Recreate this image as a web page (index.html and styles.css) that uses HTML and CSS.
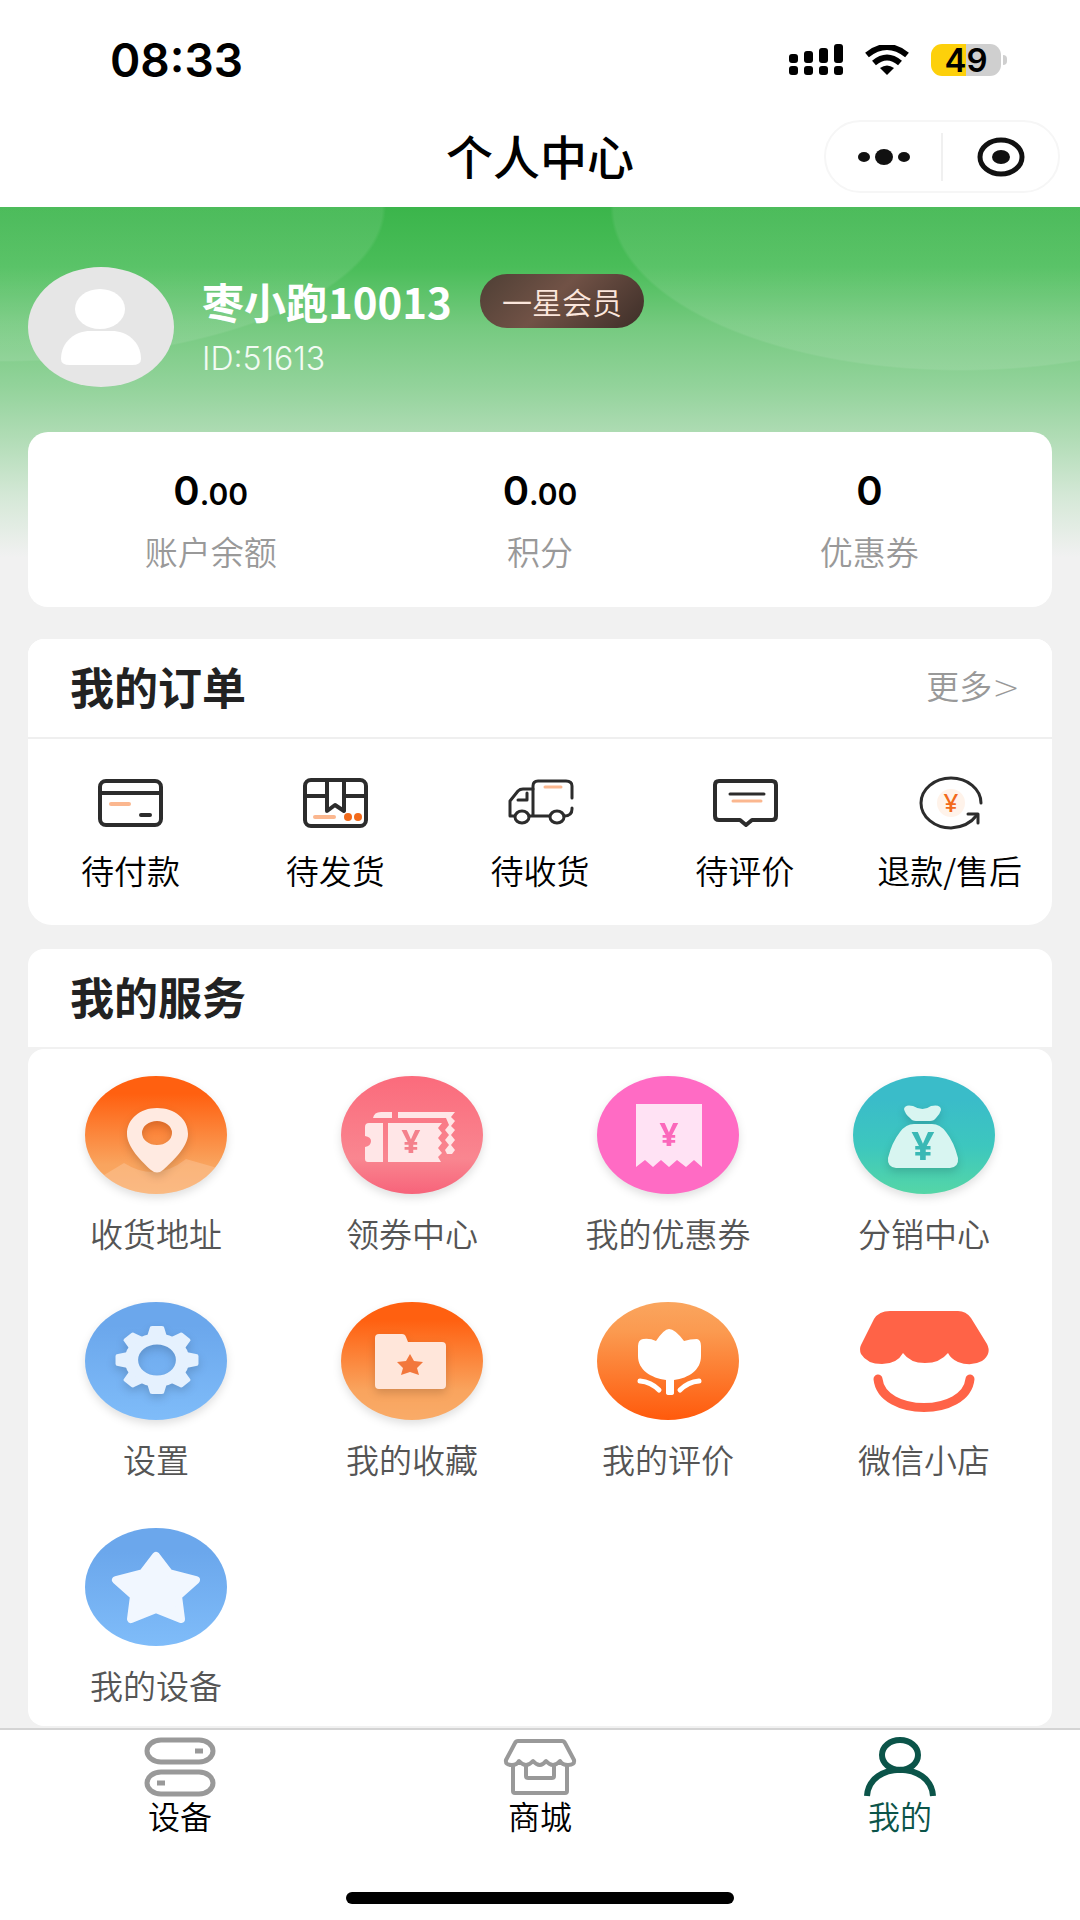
FILE: index.html
```html
<!DOCTYPE html>
<html lang="zh-CN">
<head>
    <meta charset="UTF-8">
    <meta name="viewport" content="width=device-width, initial-scale=1.0">
    <title>个人中心</title>
    <link rel="stylesheet" href="styles.css">
</head>
<body>

    <header class="top">
        <div class="status-bar">
            <span class="time">08:33</span>
            <div class="status-icons">
                <svg width="54" height="32" viewBox="0 0 54 32">
                    <rect x="0" y="10" width="9" height="9" rx="3"/>
                    <rect x="15" y="7" width="9" height="12" rx="3"/>
                    <rect x="30" y="4" width="9" height="15" rx="3"/>
                    <rect x="45" y="0" width="9" height="19" rx="3"/>
                    <rect x="0" y="22" width="9" height="9" rx="3"/>
                    <rect x="15" y="22" width="9" height="9" rx="3"/>
                    <rect x="30" y="22" width="9" height="9" rx="3"/>
                    <rect x="45" y="22" width="9" height="9" rx="3"/>
                </svg>
                <svg width="46" height="30" viewBox="0 0 46 30">
                    <path d="M3 10 Q23 -6 43 10" fill="none" stroke="#000" stroke-width="6"/>
                    <path d="M10 18 Q23 7 36 18" fill="none" stroke="#000" stroke-width="6"/>
                    <path d="M16 23 Q23 18 30 23 L23 30 Z"/>
                </svg>
                <div class="battery"><span>49</span></div>
            </div>
        </div>
        <div class="nav">
            <h1 class="nav-title">个人中心</h1>
            <div class="capsule">
                <button class="capsule-btn" aria-label="更多">
                    <svg width="52" height="18" viewBox="0 0 52 18">
                        <ellipse cx="6" cy="9" rx="6" ry="5"/>
                        <ellipse cx="26" cy="9" rx="9" ry="8"/>
                        <ellipse cx="46" cy="9" rx="6" ry="5"/>
                    </svg>
                </button>
                <button class="capsule-btn" aria-label="关闭">
                    <svg width="48" height="40" viewBox="0 0 48 40">
                        <ellipse cx="24" cy="20" rx="21" ry="17" fill="none" stroke="#111" stroke-width="5"/>
                        <ellipse cx="24" cy="20" rx="9" ry="7"/>
                    </svg>
                </button>
            </div>
        </div>
    </header>

    <main class="page">
        <section class="profile">
            <svg class="avatar" width="146" height="120" viewBox="0 0 146 120">
                <ellipse cx="73" cy="60" rx="73" ry="60" fill="#e6e6e6"/>
                <ellipse cx="72" cy="42" rx="25" ry="20" fill="#fff"/>
                <path d="M33 92 C33 74 48 64 62 64 H84 C98 64 113 74 113 92 Q113 98 104 98 H42 Q33 98 33 92 Z" fill="#fff"/>
            </svg>
            <div class="user">
                <div class="user-row">
                    <span class="user-name">枣小跑10013</span>
                    <span class="level">一星会员</span>
                </div>
                <div class="user-id">ID:51613</div>
            </div>
        </section>

        <section class="stats">
            <a class="stat" href="#balance">
                <span class="stat-num">0<small>.00</small></span>
                <span class="stat-label">账户余额</span>
            </a>
            <a class="stat" href="#points">
                <span class="stat-num">0<small>.00</small></span>
                <span class="stat-label">积分</span>
            </a>
            <a class="stat" href="#coupons">
                <span class="stat-num">0</span>
                <span class="stat-label">优惠券</span>
            </a>
        </section>

        <section class="card orders">
            <div class="card-head">
                <h2>我的订单</h2>
                <a class="more" href="#orders">更多<span class="arrow">&gt;</span></a>
            </div>
            <div class="order-list">
                <a class="order" href="#unpaid">
                    <svg class="line-icon" width="72" height="56" viewBox="0 0 72 56">
                        <rect x="6" y="6" width="61" height="44" rx="6"/>
                        <path d="M6 18 H67 M47 40 H56"/>
                        <path class="soft" d="M17 29 H35"/>
                    </svg>
                    <span>待付款</span>
                </a>
                <a class="order" href="#unshipped">
                    <svg class="line-icon" width="72" height="56" viewBox="0 0 72 56">
                        <rect x="6" y="5" width="61" height="46" rx="6"/>
                        <path d="M6 21 H28 M45 21 H67 M28 5 V36 L36 30 L45 36 V5"/>
                        <path class="soft" d="M16 42 H35"/>
                        <circle class="dot" cx="49" cy="42" r="4"/>
                        <circle class="dot" cx="59" cy="42" r="4"/>
                    </svg>
                    <span>待发货</span>
                </a>
                <a class="order" href="#shipped">
                    <svg class="line-icon thin" width="72" height="56" viewBox="0 0 72 56">
                        <path d="M10 41 H6 V26 L14 16 Q16 14 19 14 H29"/>
                        <path d="M25 41 H45 M29 41 V11 Q29 6 34 6 H62 Q68 6 68 11 V23"/>
                        <path d="M68 33 V34 Q68 41 60 41"/>
                        <path d="M23 18 V25 H14"/>
                        <ellipse cx="18" cy="42" rx="7" ry="6"/>
                        <ellipse cx="53" cy="42" rx="7" ry="6"/>
                        <path class="soft" d="M41 12 H57"/>
                    </svg>
                    <span>待收货</span>
                </a>
                <a class="order" href="#unrated">
                    <svg class="line-icon" width="72" height="56" viewBox="0 0 72 56">
                        <path d="M10 6 H63 Q67 6 67 10 V41 Q67 45 63 45 H43 L37 50 L31 45 H10 Q6 45 6 41 V10 Q6 6 10 6 Z"/>
                        <path class="thin" d="M21 19 H55"/>
                        <path class="soft thin" d="M24 26 H52"/>
                    </svg>
                    <span>待评价</span>
                </a>
                <a class="order" href="#refund">
                    <svg class="line-icon thin" width="72" height="56" viewBox="0 0 72 56">
                        <circle class="glow" cx="37" cy="28" r="14"/>
                        <path d="M67 28 A30 25 0 1 0 37 53 Q54 52 63 40"/>
                        <path d="M54 39 H64 V48"/>
                        <text x="37" y="37" class="yen yen-small">¥</text>
                    </svg>
                    <span>退款/售后</span>
                </a>
            </div>
        </section>

        <section class="card services">
            <div class="card-head">
                <h2>我的服务</h2>
            </div>
            <div class="service-list">
                <a class="service" href="#address">
                    <svg class="round-icon" width="144" height="120" viewBox="0 0 144 120">
                        <defs>
                            <linearGradient id="orange" x1="0" y1="0" x2="0" y2="1">
                                <stop offset="0.15" stop-color="#ff6010"/>
                                <stop offset="0.75" stop-color="#f9a45e"/>
                                <stop offset="1" stop-color="#f9ab68"/>
                            </linearGradient>
                            <clipPath id="round"><ellipse cx="72" cy="60" rx="71" ry="59"/></clipPath>
                        </defs>
                        <ellipse cx="72" cy="60" rx="71" ry="59" fill="url(#orange)"/>
                        <path d="M0 112 L40 88 Q72 108 102 84 L144 96 V120 H0 Z" fill="#fff" opacity="0.18" clip-path="url(#round)"/>
                        <path class="inner" fill="#ffeae1" fill-rule="evenodd" d="M73 33 C91 33 104 44 104 59 C104 72 88 87 79 95 Q73 100 67 95 C58 87 43 72 43 59 C43 44 56 33 73 33 Z M73 46 A15 12 0 1 0 73 70 A15 12 0 1 0 73 46 Z"/>
                    </svg>
                    <span>收货地址</span>
                </a>
                <a class="service" href="#coupon-center">
                    <svg class="round-icon" width="144" height="120" viewBox="0 0 144 120">
                        <defs>
                            <linearGradient id="rose" x1="0" y1="0" x2="0" y2="1">
                                <stop offset="0" stop-color="#fb6b7c"/>
                                <stop offset="0.7" stop-color="#f98690"/>
                                <stop offset="1" stop-color="#f7637a"/>
                            </linearGradient>
                        </defs>
                        <ellipse cx="72" cy="60" rx="71" ry="59" fill="url(#rose)"/>
                        <g fill="#ffe6e7">
                            <path d="M33 43 Q34 37 41 37 H52 V43 Z"/>
                            <path d="M58 37 H115 L111 42 L115 46 L111 51 L115 55 L111 60 L115 65 L111 70 L115 75 L112 79 H107 L105 75 L109 70 L105 65 L109 60 L105 55 L109 50 L106 43 H58 Z"/>
                            <path d="M29 48 H43 V87 H28 Q25 87 25 84 V72 Q31 71 31 66 Q31 62 25 61 V52 Q25 48 29 48 Z"/>
                            <path d="M48 48 H102 L98 53 L102 58 L98 63 L102 68 L98 73 L102 78 L98 82 L101 87 H48 Z"/>
                        </g>
                        <text x="71" y="78" class="yen yen-mid" fill="#f4818c">¥</text>
                    </svg>
                    <span>领券中心</span>
                </a>
                <a class="service" href="#my-coupons">
                    <svg class="round-icon" width="144" height="120" viewBox="0 0 144 120">
                        <ellipse cx="72" cy="60" rx="71" ry="59" fill="#ff6bc4"/>
                        <path fill="#ffe2f4" d="M40 29 H106 V92 L98 85 L90 92 L81 85 L73 92 L65 85 L57 92 L49 85 L40 92 Z"/>
                        <text x="73" y="71" class="yen yen-mid" fill="#fb68bb">¥</text>
                    </svg>
                    <span>我的优惠券</span>
                </a>
                <a class="service" href="#distribution">
                    <svg class="round-icon" width="144" height="120" viewBox="0 0 144 120">
                        <defs>
                            <linearGradient id="teal" x1="0" y1="0" x2="0" y2="1">
                                <stop offset="0.2" stop-color="#3abcc9"/>
                                <stop offset="0.6" stop-color="#3dc7be"/>
                                <stop offset="1" stop-color="#55d6a6"/>
                            </linearGradient>
                        </defs>
                        <ellipse cx="72" cy="60" rx="71" ry="59" fill="url(#teal)"/>
                        <g fill="#d8f5f1" class="inner">
                            <path d="M52 34 Q53 29 61 31 Q71 37 79 31 Q89 29 89 35 Q88 39 84 43 Q82 46 78 46 H64 Q60 46 58 43 Q53 39 52 34 Z"/>
                            <path d="M62 49 H80 Q88 49 94 57 Q102 67 106 83 Q107 92 98 93 H44 Q35 92 36 83 Q40 67 48 57 Q54 49 62 49 Z"/>
                        </g>
                        <text x="71" y="85" class="yen yen-big" fill="#3ab8b5">¥</text>
                    </svg>
                    <span>分销中心</span>
                </a>
                <a class="service" href="#settings">
                    <svg class="round-icon" width="144" height="120" viewBox="0 0 144 120">
                        <defs>
                            <linearGradient id="blue" x1="0" y1="0" x2="0" y2="1">
                                <stop offset="0.2" stop-color="#6ba7ec"/>
                                <stop offset="1" stop-color="#7fbcf9"/>
                            </linearGradient>
                            <path id="tooth" d="M-8 -24 L-6 -32 Q-6 -34 -4 -34 H4 Q6 -34 6 -32 L8 -24 Z"/>
                        </defs>
                        <ellipse cx="72" cy="60" rx="71" ry="59" fill="url(#blue)"/>
                        <g class="inner" transform="translate(73 59) scale(1.22 1)" fill="#e5f1fe">
                            <circle r="21" fill="none" stroke="#e5f1fe" stroke-width="11"/>
                            <use href="#tooth"/>
                            <use href="#tooth" transform="rotate(45)"/>
                            <use href="#tooth" transform="rotate(90)"/>
                            <use href="#tooth" transform="rotate(135)"/>
                            <use href="#tooth" transform="rotate(180)"/>
                            <use href="#tooth" transform="rotate(225)"/>
                            <use href="#tooth" transform="rotate(270)"/>
                            <use href="#tooth" transform="rotate(315)"/>
                        </g>
                    </svg>
                    <span>设置</span>
                </a>
                <a class="service" href="#favorites">
                    <svg class="round-icon" width="144" height="120" viewBox="0 0 144 120">
                        <ellipse cx="72" cy="60" rx="71" ry="59" fill="url(#orange)"/>
                        <path class="inner" fill="#ffe6da" d="M39 33 H62 Q65 33 66 36 L68 41 H102 Q106 41 106 45 V84 Q106 88 102 88 H39 Q35 88 35 84 V37 Q35 33 39 33 Z"/>
                        <path fill="#f2773c" d="M70 53 L74 60 L83 61 L77 67 L79 74 L70 71 L61 74 L63 67 L57 61 L66 60 Z"/>
                    </svg>
                    <span>我的收藏</span>
                </a>
                <a class="service" href="#reviews">
                    <svg width="144" height="120" viewBox="0 0 144 120">
                        <defs>
                            <linearGradient id="amber" x1="0" y1="0" x2="0" y2="1">
                                <stop offset="0" stop-color="#faa55e"/>
                                <stop offset="0.25" stop-color="#fb9a50"/>
                                <stop offset="1" stop-color="#ff5a0c"/>
                            </linearGradient>
                        </defs>
                        <ellipse cx="72" cy="60" rx="71" ry="59" fill="url(#amber)"/>
                        <path fill="#fff" d="M73 28 Q79 28 88 40 Q94 38 101 38 Q105 39 105 45 V55 C105 69 93 77 78 79 V92 Q78 94 75 94 H73 Q70 94 70 92 V79 C55 77 42 69 42 55 V45 Q42 39 47 38 Q54 37 60 40 Q68 28 73 28 Z"/>
                        <path d="M44 80 Q55 81 63 89 M103 80 Q92 81 84 89" fill="none" stroke="#fff" stroke-width="5" stroke-linecap="round"/>
                    </svg>
                    <span>我的评价</span>
                </a>
                <a class="service" href="#wechat-shop">
                    <svg width="144" height="120" viewBox="0 0 144 120">
                        <path fill="#ff6347" d="M38 10 H106 Q114 10 119 17 L135 43 Q140 53 130 60 Q119 66 106 61 Q99 58 96 52 Q88 62 73 62 Q58 62 51 52 Q45 63 30 63 Q15 63 9 53 Q7 48 9 44 L22 18 Q27 10 38 10 Z"/>
                        <path d="M26 78 C30 116 114 116 118 78" fill="none" stroke="#ff6347" stroke-width="9" stroke-linecap="round"/>
                    </svg>
                    <span>微信小店</span>
                </a>
                <a class="service" href="#devices">
                    <svg width="144" height="120" viewBox="0 0 144 120">
                        <ellipse cx="72" cy="60" rx="71" ry="59" fill="url(#blue)"/>
                        <path d="M72 29 L85 46 L112 53 L94 69 L97 92 L72 82 L47 92 L50 69 L32 53 L59 46 Z" fill="#f1f7ff" stroke="#f1f7ff" stroke-width="8" stroke-linejoin="round"/>
                    </svg>
                    <span>我的设备</span>
                </a>
            </div>
        </section>
    </main>

    <footer class="footer">
        <nav class="tabs">
            <a class="tab" href="#device">
                <svg width="76" height="62" viewBox="0 0 76 62" fill="none" stroke="#999" stroke-width="5">
                    <rect x="5" y="4" width="66" height="22" rx="14" ry="11"/>
                    <rect x="5" y="36" width="66" height="22" rx="14" ry="11"/>
                    <path d="M53 15 H61 M15 47 H23"/>
                </svg>
                <span>设备</span>
            </a>
            <a class="tab" href="#mall">
                <svg width="76" height="62" viewBox="0 0 76 62" fill="none" stroke="#999" stroke-width="4" stroke-linejoin="round">
                    <path d="M16 5 H60 Q62 5 63 7 L72 24 Q73 29 66 29 Q60 29 58 25 Q51 33 44 25 Q38 33 31 25 Q24 33 17 25 Q15 29 10 29 Q3 29 4 24 L13 7 Q14 5 16 5 Z"/>
                    <path d="M11 30 V55 Q11 57 13 57 H63 Q65 57 65 55 V30"/>
                    <path d="M24 29 V40 Q24 42 26 42 H50 Q52 42 52 40 V29"/>
                </svg>
                <span>商城</span>
            </a>
            <a class="tab active" href="#me">
                <svg width="76" height="62" viewBox="0 0 76 62" fill="none" stroke="#0b5449" stroke-width="6">
                    <ellipse cx="38" cy="19" rx="18" ry="15"/>
                    <path d="M5 60 C7 25 69 25 71 60"/>
                </svg>
                <span>我的</span>
            </a>
        </nav>
        <div class="home-bar"></div>
    </footer>

</body>
</html>
```
FILE: styles.css
```css
* {
    box-sizing: border-box;
}

body {
    margin: 0;
    min-height: 100vh;
    display: flex;
    flex-direction: column;
    background-color: #f1f1f1;
    color: #000;
    font-family: "Noto Sans CJK SC", sans-serif;
    font-size: 33px;
    font-weight: 350;
    line-height: 44px;
}

a {
    color: inherit;
    text-decoration: none;
}

h1,
h2 {
    margin: 0;
}

svg {
    display: block;
    flex: none;
}

/* Status bar and title */
.top {
    background-color: #fff;
}

.status-bar {
    display: flex;
    justify-content: space-between;
    align-items: center;
    height: 120px;
    padding: 0 79px 0 110px;
}

.time {
    font-family: Inter, sans-serif;
    font-size: 46px;
    font-weight: 600;
}

.status-icons {
    display: flex;
    align-items: center;
    gap: 21px;
}

.battery {
    position: relative;
    width: 70px;
    height: 32px;
    border-radius: 11px;
    background: linear-gradient(to right, #fdd00b 50%, #cfcfcf 50%);
    font-family: Inter, sans-serif;
    font-size: 33px;
    font-weight: 600;
    line-height: 32px;
    text-align: center;
}

/* Battery tip */
.battery::after {
    content: "";
    position: absolute;
    right: -6px;
    top: 11px;
    width: 4px;
    height: 10px;
    border-radius: 0 4px 4px 0;
    background-color: #cfcfcf;
}

.nav {
    display: grid;
    grid-template-columns: 1fr auto 1fr;
    align-items: center;
    padding: 0 20px 14px;
}

.nav-title {
    grid-column: 2;
    padding-bottom: 4px;
    font-size: 47px;
    font-weight: 500;
    line-height: 56px;
}

.capsule {
    display: flex;
    justify-self: end;
    align-items: center;
    width: 236px;
    height: 73px;
    border: 2px solid #f6f6f6;
    border-radius: 37px;
}

.capsule-btn {
    display: flex;
    flex: 1;
    justify-content: center;
    align-items: center;
    height: 48px;
    padding: 0;
    border: none;
    background: none;
    fill: #111;
    cursor: pointer;
}

.capsule-btn + .capsule-btn {
    border-left: 2px solid #f0f0f0;
}

/* Page body, green fades into the grey */
.page {
    flex: 1;
    padding: 60px 28px 2px;
    background-image:
        radial-gradient(386px 155px at 0 0, rgba(255, 255, 255, 0.09) 99%, transparent 100%),
        radial-gradient(351px 164px at 89% 0, rgba(255, 255, 255, 0.09) 99%, transparent 100%),
        linear-gradient(to bottom, #3bb54b 0, #4abd59 60px, #76ca80 120px, #93d39b 180px, #b0dcb5 230px, #d5e8d7 290px, #f1f1f1 350px);
    background-size: 100% 360px;
    background-repeat: no-repeat;
}

.profile {
    display: flex;
    align-items: center;
    gap: 28px;
}

.user-row {
    display: flex;
    align-items: center;
    gap: 28px;
}

.user-name {
    color: #fff;
    font-size: 42px;
    font-weight: 700;
    line-height: 52px;
}

.level {
    padding: 5px 22px;
    border-radius: 28px;
    background: linear-gradient(135deg, #4e3f35, #715246 45%, #3d2e28);
    color: #fbe6dc;
    font-size: 30px;
}

.user-id {
    margin-top: 9px;
    color: #f2fbf3;
    font-family: Inter, sans-serif;
    font-size: 32px;
    font-weight: 300;
}

.stats {
    display: grid;
    grid-template-columns: repeat(3, 1fr);
    margin-top: 45px;
    padding: 37px 18px 34px;
    border-radius: 20px;
    background-color: #fff;
}

.stat {
    display: flex;
    flex-direction: column;
    align-items: center;
    gap: 16px;
}

.stat-num {
    height: 44px;
    font-family: Inter, sans-serif;
    font-size: 40px;
    font-weight: 600;
}

.stat-num small {
    font-size: 30px;
}

.stat-label {
    color: #999;
}

/* Cards */
.card-head {
    display: flex;
    justify-content: space-between;
    align-items: center;
    height: 100px;
    padding: 0 32px 4px 42px;
    border-bottom: 2px solid #efefef;
    border-radius: 16px 16px 0 0;
    background-color: #fff;
}

.card-head h2 {
    color: #222;
    font-size: 44px;
    font-weight: 700;
}

.more {
    color: #999;
}

.arrow {
    font-family: "DejaVu Sans", sans-serif;
    font-weight: 200;
}

.orders {
    margin-top: 32px;
    border-radius: 16px 16px 24px 24px;
    background-color: #fff;
}

.order-list {
    display: grid;
    grid-template-columns: repeat(5, 1fr);
    padding: 36px 0 33px;
}

.order {
    display: flex;
    flex-direction: column;
    align-items: center;
    gap: 17px;
    white-space: nowrap;
}

.line-icon {
    fill: none;
    stroke: #2c2c2c;
    stroke-width: 4;
    stroke-linecap: round;
    stroke-linejoin: round;
}

.thin {
    stroke-width: 3;
}

.soft {
    stroke: #fbb78f;
}

.dot {
    fill: #f26a1b;
    stroke: none;
}

.glow {
    fill: #fff3ea;
    stroke: none;
}

.yen {
    font-family: "Noto Sans", sans-serif;
    font-weight: 700;
    text-anchor: middle;
    stroke: none;
}

.yen-small {
    fill: #f26a1b;
    font-size: 26px;
    font-weight: 500;
}

.yen-mid {
    font-size: 33px;
}

.yen-big {
    font-size: 40px;
}

.services {
    margin-top: 24px;
}

.services .card-head {
    height: 98px;
    border-bottom: none;
}

.service-list {
    display: grid;
    grid-template-columns: repeat(4, 1fr);
    row-gap: 46px;
    margin-top: 2px;
    padding: 26px 0 19px;
    border-radius: 16px;
    background-color: #fff;
}

.service {
    display: flex;
    flex-direction: column;
    align-items: center;
    gap: 16px;
    color: #555;
}

.round-icon {
    filter: drop-shadow(0 4px 4px rgba(0, 0, 0, 0.12));
}

.inner {
    filter: drop-shadow(0 4px 4px rgba(0, 0, 0, 0.15));
}

/* Bottom tabs */
.footer {
    background-color: #fff;
    border-top: 2px solid #d4d4d4;
}

.tabs {
    display: grid;
    grid-template-columns: repeat(3, 1fr);
    padding-top: 6px;
}

.tab {
    display: flex;
    flex-direction: column;
    align-items: center;
    font-size: 32px;
    line-height: 34px;
}

.active {
    color: #0b5449;
}

.home-bar {
    width: 36%;
    height: 12px;
    margin: 60px auto 17px;
    border-radius: 6px;
    background-color: #000;
}
```
